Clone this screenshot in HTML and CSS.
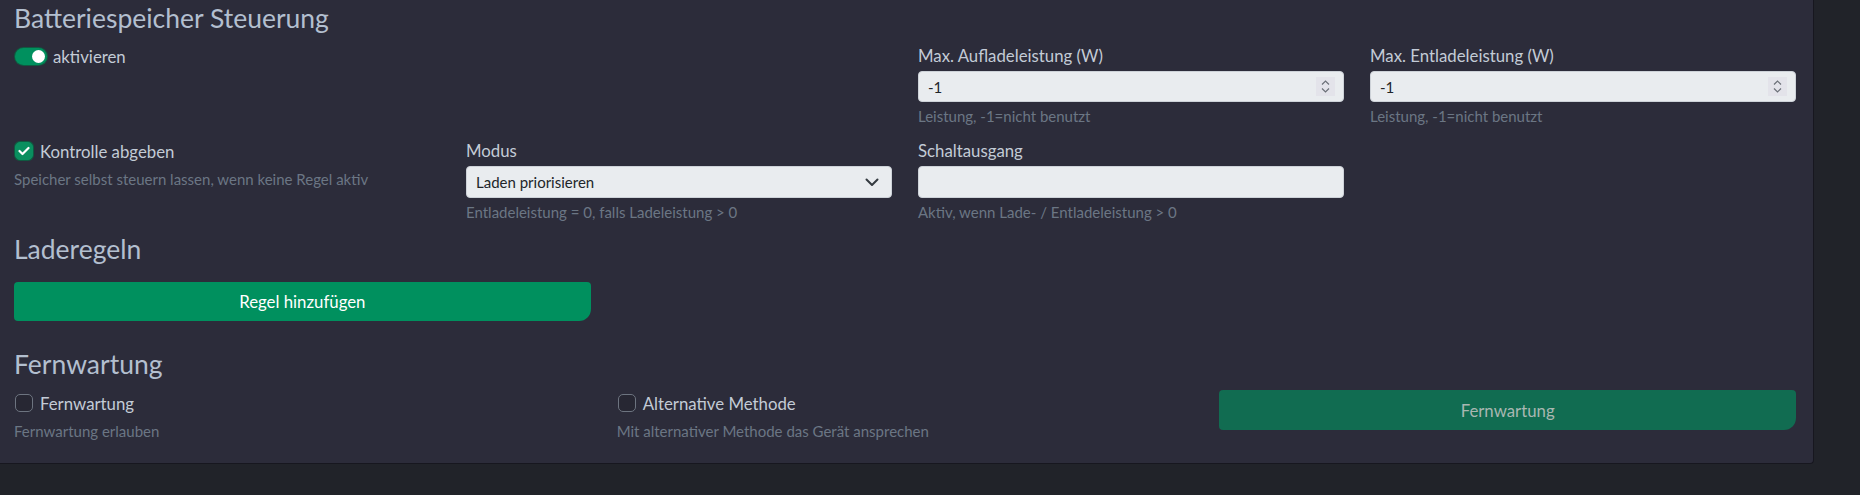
FILE: index.html
```html
<!DOCTYPE html>
<html lang="de">
<head>
  <meta charset="UTF-8">
  <title>Batteriespeicher Steuerung</title>
  <link rel="stylesheet" href="styles.css">
</head>
<body>

<div class="panel">
  <h4 class="heading heading-first">Batteriespeicher Steuerung</h4>

  <div class="grid4">
    <div class="cell">
      <div class="switch-line">
        <span class="switch"><span class="knob"></span></span>
        <span class="check-text">aktivieren</span>
      </div>
    </div>
    <div class="cell"></div>
    <div class="cell">
      <label class="label">Max. Aufladeleistung (W)</label>
      <div class="field">
        <span class="value">-1</span>
        <span class="spin">
          <svg width="11" height="15" viewBox="0 0 11 15"><path d="M2 5.5 L5.5 2 L9 5.5 M2 9.5 L5.5 13 L9 9.5" fill="none" stroke="#6b7078" stroke-width="1.2"/></svg>
        </span>
      </div>
      <div class="help">Leistung, -1=nicht benutzt</div>
    </div>
    <div class="cell">
      <label class="label">Max. Entladeleistung (W)</label>
      <div class="field">
        <span class="value">-1</span>
        <span class="spin">
          <svg width="11" height="15" viewBox="0 0 11 15"><path d="M2 5.5 L5.5 2 L9 5.5 M2 9.5 L5.5 13 L9 9.5" fill="none" stroke="#6b7078" stroke-width="1.2"/></svg>
        </span>
      </div>
      <div class="help">Leistung, -1=nicht benutzt</div>
    </div>

    <div class="cell">
      <div class="check-line">
        <span class="box checked">
          <svg width="12" height="10" viewBox="0 0 12 10"><path d="M1.5 5 L4.5 8 L10.5 2" fill="none" stroke="#fff" stroke-width="2.2" stroke-linecap="round" stroke-linejoin="round"/></svg>
        </span>
        <span class="check-text">Kontrolle abgeben</span>
      </div>
      <div class="help help-check">Speicher selbst steuern lassen, wenn keine Regel aktiv</div>
    </div>
    <div class="cell">
      <label class="label">Modus</label>
      <div class="field select">
        <span class="value">Laden priorisieren</span>
        <svg class="chevron" width="14" height="9" viewBox="0 0 14 9"><path d="M1.5 1.5 L7 7 L12.5 1.5" fill="none" stroke="#343a40" stroke-width="2" stroke-linecap="round" stroke-linejoin="round"/></svg>
      </div>
      <div class="help">Entladeleistung = 0, falls Ladeleistung &gt; 0</div>
    </div>
    <div class="cell">
      <label class="label">Schaltausgang</label>
      <div class="field select"></div>
      <div class="help">Aktiv, wenn Lade- / Entladeleistung &gt; 0</div>
    </div>
    <div class="cell"></div>
  </div>

  <h4 class="heading heading-rules">Laderegeln</h4>
  <div class="grid3">
    <div class="cell">
      <button class="btn">Regel hinzufügen</button>
    </div>
  </div>

  <h4 class="heading heading-remote">Fernwartung</h4>
  <div class="grid3">
    <div class="cell">
      <div class="check-line check-pad">
        <span class="box"></span>
        <span class="check-text">Fernwartung</span>
      </div>
      <div class="help help-check">Fernwartung erlauben</div>
    </div>
    <div class="cell">
      <div class="check-line check-pad">
        <span class="box"></span>
        <span class="check-text">Alternative Methode</span>
      </div>
      <div class="help help-check">Mit alternativer Methode das Gerät ansprechen</div>
    </div>
    <div class="cell">
      <button class="btn btn-off">Fernwartung</button>
    </div>
  </div>
</div>

</body>
</html>
```

FILE: styles.css
```css
body { margin: 0; background: #212329; font-family: "Lato", "Liberation Sans", sans-serif; }

.panel { width: 1814px; height: 464px; box-sizing: border-box; background: #2c2c3a; padding: 4px 17px 0 14px; border-right: 1px solid #17171f; border-bottom: 1px solid #17171f; border-bottom-right-radius: 4px; }

.heading { margin: 0; font-size: 26.5px; font-weight: 400; line-height: 29px; color: #b3bfcf; }
.heading-first { margin-bottom: 11px; }
.heading-rules { margin-top: 12px; margin-bottom: 18px; }
.heading-remote { margin-top: 29px; margin-bottom: 10px; }

.grid4 { display: grid; grid-template-columns: repeat(4, 1fr); column-gap: 26px; row-gap: 12px; }
.grid3 { display: grid; grid-template-columns: repeat(3, 1fr); column-gap: 26px; }

.label { display: block; font-size: 16.8px; line-height: 24px; color: #c3cbd6; margin-bottom: 3px; }

.field { height: 31px; box-sizing: border-box; display: flex; align-items: center; justify-content: space-between; background: #e9ecef; border: 1px solid #cdd2d8; border-radius: 4px; padding: 0 9px; font-size: 15px; color: #212529; }
.field.select { height: 32px; }
.spin { width: 19px; height: 19px; display: flex; align-items: center; justify-content: center; background: #e3e3ea; margin-right: -1px; }
.chevron { margin-right: 3px; }

.help { margin-top: 4px; font-size: 15px; line-height: 21px; color: #6b7684; }
.help-check { margin-top: 6px; }

.switch-line, .check-line { display: flex; align-items: center; height: 24px; }
.check-pad { margin-top: 2px; }
.switch { width: 32px; height: 17px; border-radius: 9px; background: #00905e; box-shadow: 0 0 0 1px #0f5b41; display: flex; align-items: center; justify-content: flex-end; padding: 0 2px; box-sizing: border-box; margin: 0 6px 0 1px; }
.knob { width: 13px; height: 13px; border-radius: 50%; background: #fff; }
.box { width: 18px; height: 18px; box-sizing: border-box; border-radius: 5px; border: 1px solid #6d7480; background: #272733; margin: 0 7px 0 1px; display: flex; align-items: center; justify-content: center; }
.box.checked { background: #0a8f5f; border-color: #0a8f5f; box-shadow: 0 0 0 1px #0f5b41; }
.check-text { font-size: 16.8px; color: #c3cbd6; }

.btn { width: 100%; height: 39px; border: none; border-radius: 4px 4px 12px 4px; background: #00905e; color: #fff; font-family: inherit; font-size: 16.8px; cursor: pointer; }
.btn-off { height: 40px; margin-top: 1px; background: #116c51; color: #a9b7b1; }
```
